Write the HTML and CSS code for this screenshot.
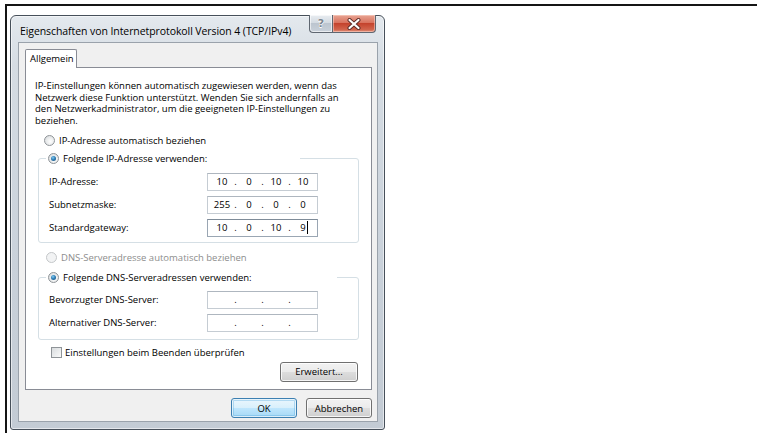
FILE: index.html
```html
<!DOCTYPE html>
<html lang="de">
<head>
<meta charset="utf-8">
<title>Eigenschaften von Internetprotokoll Version 4 (TCP/IPv4)</title>
<link rel="stylesheet" href="styles.css">
</head>
<body>
<div class="sheet">
  <div class="dialog">
    <div class="titlebar">
      <span class="title">Eigenschaften von Internetprotokoll Version 4 (TCP/IPv4)</span>
      <div class="caption-buttons">
        <div class="cap-btn help"><span class="help-glyph">?</span></div>
        <div class="cap-btn close">
          <svg width="14" height="12" viewBox="0 0 14 12">
            <path d="M2.5 2 L11.5 10 M11.5 2 L2.5 10" stroke="#5a2a26" stroke-width="4" stroke-linecap="round"/>
            <path d="M2.5 2 L11.5 10 M11.5 2 L2.5 10" stroke="#ffffff" stroke-width="2.2" stroke-linecap="round"/>
          </svg>
        </div>
      </div>
    </div>
    <div class="client">
      <div class="tabs"><div class="tab active">Allgemein</div></div>
      <div class="panel">
        <p class="intro">IP-Einstellungen können automatisch zugewiesen werden, wenn das<br>Netzwerk diese Funktion unterstützt. Wenden Sie sich andernfalls an<br>den Netzwerkadministrator, um die geeigneten IP-Einstellungen zu<br>beziehen.</p>

        <div class="option first"><span class="radio"></span><span>IP-Adresse automatisch beziehen</span></div>

        <fieldset class="group ip">
          <legend class="legend-ip"><span class="radio checked"></span><span>Folgende IP-Adresse verwenden:</span></legend>
          <div class="field-row">
            <span class="field-label">IP-Adresse:</span>
            <div class="ipbox"><span class="oct">10</span><span class="dot">.</span><span class="oct">0</span><span class="dot">.</span><span class="oct">10</span><span class="dot">.</span><span class="oct">10</span></div>
          </div>
          <div class="field-row">
            <span class="field-label">Subnetzmaske:</span>
            <div class="ipbox"><span class="oct">255</span><span class="dot">.</span><span class="oct">0</span><span class="dot">.</span><span class="oct">0</span><span class="dot">.</span><span class="oct">0</span></div>
          </div>
          <div class="field-row">
            <span class="field-label">Standardgateway:</span>
            <div class="ipbox focused"><span class="oct">10</span><span class="dot">.</span><span class="oct">0</span><span class="dot">.</span><span class="oct">10</span><span class="dot">.</span><span class="oct caret">9</span></div>
          </div>
        </fieldset>

        <div class="option disabled"><span class="radio"></span><span>DNS-Serveradresse automatisch beziehen</span></div>

        <fieldset class="group dns">
          <legend class="legend-dns"><span class="radio checked"></span><span>Folgende DNS-Serveradressen verwenden:</span></legend>
          <div class="field-row">
            <span class="field-label">Bevorzugter DNS-Server:</span>
            <div class="ipbox"><span class="oct"></span><span class="dot">.</span><span class="oct"></span><span class="dot">.</span><span class="oct"></span><span class="dot">.</span><span class="oct"></span></div>
          </div>
          <div class="field-row">
            <span class="field-label">Alternativer DNS-Server:</span>
            <div class="ipbox"><span class="oct"></span><span class="dot">.</span><span class="oct"></span><span class="dot">.</span><span class="oct"></span><span class="dot">.</span><span class="oct"></span></div>
          </div>
        </fieldset>

        <div class="option check-row"><span class="checkbox"></span><span>Einstellungen beim Beenden überprüfen</span></div>

        <div class="panel-actions"><button class="btn advanced">Erweitert...</button></div>
      </div>
      <div class="dialog-actions">
        <button class="btn default">OK</button>
        <button class="btn">Abbrechen</button>
      </div>
    </div>
  </div>
</div>
</body>
</html>
```
FILE: styles.css
```css
* { box-sizing: border-box; }

html, body {
  margin: 0;
  padding: 0;
  background: #ffffff;
}

body {
  width: 761px;
  height: 433px;
  overflow: hidden;
  padding: 4px 4px 0 5px;
  font-family: "Open Sans", "Noto Sans", sans-serif;
  font-size: 9.5px;
  color: #000;
}

/* page frame lines */
.sheet {
  height: 429px;
  border-top: 2px solid #151515;
  border-left: 2px solid #151515;
  padding: 9px 0 0 3px;
}

/* window */
.dialog {
  width: 375px;
  height: 415px;
  border: 1px solid #47505a;
  border-radius: 6px 6px 3px 3px;
  background: linear-gradient(180deg, #e4e9ee 0%, #d5dce3 12%, #c9d1da 60%, #c3cbd4 100%);
  padding: 0 6px 7px 7px;
  display: flex;
  flex-direction: column;
  box-shadow: inset 0 0 0 1px rgba(255,255,255,0.55);
}

.titlebar {
  height: 26px;
  display: flex;
  align-items: flex-start;
  justify-content: space-between;
  flex: none;
}

.title {
  font-size: 10.5px;
  letter-spacing: -0.08px;
  padding: 8px 0 0 2px;
  color: #000;
  white-space: nowrap;
}

.caption-buttons {
  display: flex;
  margin-top: -1px;
  margin-right: 2px;
}

.cap-btn {
  height: 18px;
  border: 1px solid #5f6771;
  border-top: none;
  display: flex;
  align-items: center;
  justify-content: center;
}

.help {
  width: 23px;
  border-radius: 0 0 0 4px;
  border-right: none;
  background: linear-gradient(180deg, #e9edf1 0%, #d4dbe2 45%, #bcc5cf 50%, #c9d1da 100%);
  box-shadow: inset 0 0 0 1px rgba(255,255,255,0.6);
}

.help-glyph {
  font-family: "DejaVu Sans", sans-serif;
  font-weight: bold;
  font-size: 11px;
  color: #7b8590;
  text-shadow: 0 0 1px #fff, 0 0 1px #fff, 0 1px 0 #fff;
}

.close {
  width: 44px;
  border-radius: 0 0 4px 0;
  background: linear-gradient(180deg, #e8a594 0%, #d9735f 45%, #c4432d 50%, #d1644c 85%, #e0917b 100%);
  box-shadow: inset 0 0 0 1px rgba(255,220,210,0.5);
}

/* client area */
.client {
  flex: 1;
  background: #f0f0f0;
  border: 1px solid #9aa2ab;
  padding: 6px 5px 3px 6px;
  display: flex;
  flex-direction: column;
}

.tabs {
  display: flex;
  height: 18px;
  flex: none;
}

.tab {
  padding: 2px 5px 0 4px;
  border: 1px solid #898c95;
  border-bottom: none;
  background: #ffffff;
  height: 19px;
  position: relative;
  z-index: 1;
  width: 52px;
  border-radius: 2px 2px 0 0;
}

.panel {
  border: 1px solid #898c95;
  background: #ffffff;
  padding: 0 0 6px 9px;
  display: flex;
  flex-direction: column;
  height: 323px;
  flex: none;
}

.intro {
  margin: 12px 0 0 0;
  line-height: 11.7px;
}

.option {
  display: flex;
  align-items: center;
  height: 14px;
  gap: 4px;
}

.option.first {
  margin: 7px 0 0 9px;
}

.option.disabled {
  margin: 8px 0 0 11px;
  color: #8d8d8d;
}

.option.check-row {
  margin: 6px 0 0 16px;
  gap: 3px;
}

/* radio and check glyphs */
.radio {
  width: 11px;
  height: 11px;
  border-radius: 50%;
  border: 1px solid #8f9498;
  background: radial-gradient(circle at 60% 60%, #ffffff 0%, #e7e9ea 55%, #cfd3d6 100%);
  flex: none;
  position: relative;
}

.radio.checked::after {
  content: "";
  position: absolute;
  left: 2px;
  top: 2px;
  width: 5px;
  height: 5px;
  border-radius: 50%;
  background: radial-gradient(circle at 40% 35%, #86cdf2 0%, #2f7fb8 45%, #17476d 100%);
}

.option.disabled .radio {
  border-color: #c4c7c9;
  background: #f2f3f4;
}

.checkbox {
  width: 11px;
  height: 11px;
  border: 1px solid #8f9498;
  background: linear-gradient(135deg, #d9dcde 0%, #eceeef 60%, #fafafa 100%);
  flex: none;
}

/* group boxes */
.group {
  margin: 4px 0 0 3px;
  width: 321px;
  border: 1px solid #d5dfe5;
  border-radius: 3px;
  padding: 7px 0 5px 10px;
  min-width: 0;
}

.group.dns {
  margin-top: 6px;
  padding: 6px 0 7px 10px;
}

.group legend {
  display: flex;
  align-items: center;
  gap: 4px;
  height: 14px;
  padding: 0 0 0 2px;
  margin-left: -3px;
  background: #ffffff;
}

.legend-ip { width: 254px; }
.legend-dns { width: 291px; }

.field-row {
  display: flex;
  align-items: center;
  height: 18px;
  margin-top: 5px;
}

.field-row:first-of-type { margin-top: 0; }

.field-label {
  width: 158px;
  flex: none;
}

.ipbox {
  width: 111px;
  height: 18px;
  border: 1px solid #c5ccd3;
  border-top-color: #aeb6bf;
  display: flex;
  align-items: center;
  padding: 0 0 0 3px;
  background: #fff;
}

.ipbox.focused {
  border-color: #9aa6b3;
  border-top-color: #7e8b98;
}

.oct {
  width: 22px;
  text-align: center;
}

.dot {
  width: 5px;
  text-align: center;
}

.caret {
  position: relative;
}

.caret::after {
  content: "";
  position: absolute;
  top: 0;
  bottom: 0;
  margin-left: 1px;
  width: 1px;
  background: #000;
}

/* buttons */
.btn {
  font-family: inherit;
  font-size: inherit;
  color: #000;
  height: 20px;
  border: 1px solid #707070;
  border-radius: 3px;
  background: linear-gradient(180deg, #f2f2f2 0%, #ebebeb 48%, #dddddd 52%, #cfcfcf 100%);
  box-shadow: inset 0 0 0 1px rgba(255,255,255,0.8);
  padding: 0;
}

.panel-actions {
  display: flex;
  justify-content: flex-end;
  margin: 2px 13px 0 0;
}

.advanced {
  width: 78px;
}

.dialog-actions {
  display: flex;
  justify-content: flex-end;
  gap: 9px;
  margin-top: 8px;
}

.dialog-actions .btn {
  width: 66px;
}

.btn.default {
  border-color: #3c7fb1;
  background: linear-gradient(180deg, #eaf6fd 0%, #d9f0fc 48%, #bee6fd 52%, #a7d9f5 100%);
  box-shadow: inset 0 0 0 1px rgba(255,255,255,0.7), inset 0 0 0 2px rgba(76,167,222,0.35);
}
```
